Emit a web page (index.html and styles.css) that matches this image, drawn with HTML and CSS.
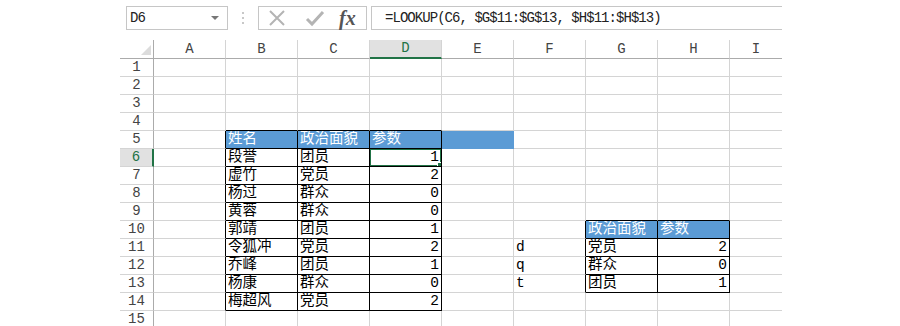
FILE: index.html
```html
<!DOCTYPE html>
<html lang="zh-CN">
<head>
    <meta charset="UTF-8">
    <title>LOOKUP</title>
    <link rel="stylesheet" href="styles.css">
</head>
<body>
    <div class="formula-bar">
        <div class="name-box">
            <span>D6</span>
            <span class="drop"></span>
        </div>
        <div class="grip"><i></i><i></i><i></i></div>
        <div class="fx-buttons">
            <svg width="20" height="20" viewBox="0 0 20 20"><path d="M3 3 L17 17 M17 3 L3 17" stroke="#b4b4b4" stroke-width="2" fill="none"/></svg>
            <svg width="20" height="20" viewBox="0 0 20 20"><path d="M2 11 L7 16 L18 4" stroke="#b4b4b4" stroke-width="3" fill="none"/></svg>
            <span class="fx">fx</span>
        </div>
        <div class="formula">=LOOKUP(C6, $G$11:$G$13, $H$11:$H$13)</div>
    </div>

    <table class="sheet">
        <colgroup>
            <col class="c-head">
            <col class="c"><col class="c"><col class="c"><col class="c">
            <col class="c"><col class="c"><col class="c"><col class="c">
            <col class="c-last">
        </colgroup>
        <tr class="col-heads">
            <th class="corner"><span class="tri"></span></th>
            <th>A</th><th>B</th><th>C</th><th class="sel">D</th><th>E</th><th>F</th><th>G</th><th>H</th><th>I</th>
        </tr>
        <tr><th>1</th><td></td><td></td><td></td><td></td><td></td><td></td><td></td><td></td><td></td></tr>
        <tr><th>2</th><td></td><td></td><td></td><td></td><td></td><td></td><td></td><td></td><td></td></tr>
        <tr><th>3</th><td></td><td></td><td></td><td></td><td></td><td></td><td></td><td></td><td></td></tr>
        <tr><th>4</th><td></td><td class="bt"></td><td class="bt"></td><td class="bt"></td><td></td><td></td><td></td><td></td><td></td></tr>
        <tr><th>5</th><td class="bl"></td><td class="bk hd">姓名</td><td class="bk hd">政治面貌</td><td class="bk hd">参数</td><td class="hd"></td><td></td><td></td><td></td><td></td></tr>
        <tr><th class="sel">6</th><td class="bl"></td><td class="bk">段誉</td><td class="bk">团员</td><td class="bk num active">1<span class="cursor"><span class="handle"></span></span></td><td></td><td></td><td></td><td></td><td></td></tr>
        <tr><th>7</th><td class="bl"></td><td class="bk">虚竹</td><td class="bk">党员</td><td class="bk num">2</td><td></td><td></td><td></td><td></td><td></td></tr>
        <tr><th>8</th><td class="bl"></td><td class="bk">杨过</td><td class="bk">群众</td><td class="bk num">0</td><td></td><td></td><td></td><td></td><td></td></tr>
        <tr><th>9</th><td class="bl"></td><td class="bk">黄蓉</td><td class="bk">群众</td><td class="bk num">0</td><td></td><td></td><td class="bt"></td><td class="bt"></td><td></td></tr>
        <tr><th>10</th><td class="bl"></td><td class="bk">郭靖</td><td class="bk">团员</td><td class="bk num">1</td><td></td><td class="bl"></td><td class="bk hd">政治面貌</td><td class="bk hd">参数</td><td></td></tr>
        <tr><th>11</th><td class="bl"></td><td class="bk">令狐冲</td><td class="bk">党员</td><td class="bk num">2</td><td></td><td class="bl">d</td><td class="bk">党员</td><td class="bk num">2</td><td></td></tr>
        <tr><th>12</th><td class="bl"></td><td class="bk">乔峰</td><td class="bk">团员</td><td class="bk num">1</td><td></td><td class="bl">q</td><td class="bk">群众</td><td class="bk num">0</td><td></td></tr>
        <tr><th>13</th><td class="bl"></td><td class="bk">杨康</td><td class="bk">群众</td><td class="bk num">0</td><td></td><td class="bl">t</td><td class="bk">团员</td><td class="bk num">1</td><td></td></tr>
        <tr><th>14</th><td class="bl"></td><td class="bk">梅超风</td><td class="bk">党员</td><td class="bk num">2</td><td></td><td></td><td></td><td></td><td></td></tr>
        <tr><th>15</th><td></td><td></td><td></td><td></td><td></td><td></td><td></td><td></td><td></td></tr>
    </table>
</body>
</html>
```

FILE: styles.css
```css
body {
    margin: 0;
    background: #fff;
    font-family: "Liberation Mono", "Noto Sans CJK SC", monospace;
    color: #000;
}

/* formula bar */
.formula-bar {
    display: flex;
    align-items: center;
    margin: 6px 0 0 126px;
    height: 24px;
}

.name-box {
    box-sizing: border-box;
    width: 102px;
    height: 24px;
    border: 1px solid #c6c6c6;
    display: flex;
    align-items: center;
    justify-content: space-between;
    padding: 0 8px 0 3px;
    font-size: 14px;
    letter-spacing: -1px;
    color: #222;
}

.drop {
    width: 0;
    height: 0;
    border-left: 4px solid transparent;
    border-right: 4px solid transparent;
    border-top: 4px solid #777;
}

.grip {
    width: 30px;
    display: flex;
    flex-direction: column;
    align-items: center;
    gap: 3px;
}
.grip i {
    width: 2px;
    height: 2px;
    background: #c8c8c8;
}

.fx-buttons {
    box-sizing: border-box;
    width: 109px;
    height: 24px;
    border: 1px solid #c6c6c6;
    display: flex;
    align-items: center;
    gap: 18px;
    padding-left: 8px;
}

.fx {
    font-family: "Liberation Serif", serif;
    font-style: italic;
    font-weight: bold;
    font-size: 20px;
    color: #555;
    margin-left: -4px;
}

.formula {
    box-sizing: border-box;
    margin-left: 4px;
    width: 411px;
    height: 24px;
    border: 1px solid #c6c6c6;
    border-right: none;
    padding-left: 13px;
    line-height: 22px;
    font-size: 14px;
    letter-spacing: -0.95px;
    color: #222;
}

/* worksheet */
.sheet {
    margin: 10px 0 0 120px;
    table-layout: fixed;
    width: 662px;
    border-collapse: separate;
    border-spacing: 0;
}
.c-head { width: 34px; }
.c { width: 72px; }
.c-last { width: 52px; }

.sheet th,
.sheet td {
    box-sizing: border-box;
    height: 18px;
    padding: 0;
    border-right: 1px solid #d4d4d4;
    border-bottom: 1px solid #d4d4d4;
    white-space: nowrap;
    overflow: hidden;
}

.sheet th {
    font-weight: normal;
    font-size: 14px;
    color: #444;
    text-align: center;
    line-height: 17px;
}
.sheet tr > th:first-child {
    border-right-color: #ababab;
}
.col-heads th {
    height: 17px;
    border-bottom-color: #ababab;
}
.col-heads th:last-child { border-right: none; }
.sheet tr > td:last-child { border-right: none; }

.corner { position: relative; }
.tri {
    position: absolute;
    right: 2px;
    bottom: 3px;
    width: 0;
    height: 0;
    border-left: 10px solid transparent;
    border-bottom: 10px solid #dcdcdc;
}

.sheet th.sel {
    background: #e1e1e1;
    color: #217346;
}
.col-heads th.sel { border-bottom: 2px solid #217346; }
.sheet tr > th.sel:first-child { border-right: 2px solid #217346; }

.sheet td {
    font-size: 14.5px;
    line-height: 17px;
    vertical-align: bottom;
    padding: 0 2px 0 2px;
}

.bk {
    border-right-color: #000 !important;
    border-bottom-color: #000 !important;
}
.bl { border-right-color: #000 !important; }
.bt { border-bottom-color: #000 !important; }

.hd {
    background: #5b9bd5;
    color: #fff;
}
.sheet td.hd:not(.bk) {
    border-right-color: #5b9bd5;
    border-bottom-color: #5b9bd5;
}

.num { text-align: right; }

.active { position: relative; overflow: visible; }
.cursor {
    position: absolute;
    left: -1px;
    top: -1px;
    right: -1px;
    bottom: -1px;
    border: 2px solid #217346;
}
.handle {
    position: absolute;
    right: -4px;
    bottom: -4px;
    width: 5px;
    height: 5px;
    background: #217346;
    border: 1px solid #fff;
}
```
